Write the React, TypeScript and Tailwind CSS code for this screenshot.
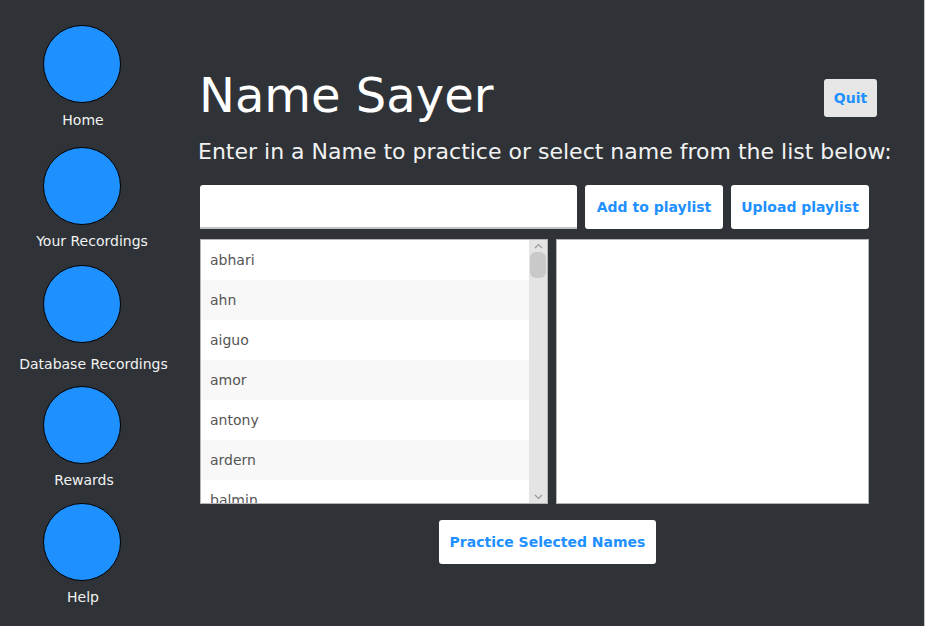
const navItems = [
  { label: "Home", circleMt: "mt-[25px]", labelMt: "mt-[9px]", shift: "pl-[2px]" },
  { label: "Your Recordings", circleMt: "mt-[18px]", labelMt: "mt-[8px]", shift: "pl-[20px]" },
  { label: "Database Recordings", circleMt: "mt-[15px]", labelMt: "mt-[13px]", shift: "pl-[23px]" },
  { label: "Rewards", circleMt: "mt-[13px]", labelMt: "mt-[8px]", shift: "pl-[4px]" },
  { label: "Help", circleMt: "mt-[14px]", labelMt: "mt-[8px]", shift: "pl-[2px]" },
];

const names = ["abhari", "ahn", "aiguo", "amor", "antony", "ardern", "balmin"];

function Chevron({ up }: { up?: boolean }) {
  return (
    <svg width="9" height="6" viewBox="0 0 9 6" className="text-[#9a9a9a]">
      <polyline
        points={up ? "1,5 4.5,1.5 8,5" : "1,1 4.5,4.5 8,1"}
        fill="none"
        stroke="currentColor"
        strokeWidth="1.2"
      />
    </svg>
  );
}

export default function App() {
  return (
    <div className="flex h-[626px] w-[925px] overflow-hidden border-r border-[#c4c4c4] bg-[#2f3338] font-['DejaVu_Sans',sans-serif]">
      {/* sidebar */}
      <aside className="flex w-[164px] shrink-0 flex-col items-center">
        {navItems.map((item) => (
          <div key={item.label} className="flex flex-col items-center">
            <div className={`${item.circleMt} h-[78px] w-[78px] rounded-full border border-black bg-[#1e90ff]`} />
            <span className={`${item.labelMt} ${item.shift} whitespace-nowrap text-[14px] leading-[17px] text-[#f2f2f2]`}>
              {item.label}
            </span>
          </div>
        ))}
      </aside>

      {/* main */}
      <main className="ml-[36px] flex w-[677px] flex-col pt-[71px]">
        <div className="flex items-start">
          <h1 className="-ml-[1px] text-[48px] leading-none text-white">Name Sayer</h1>
          <button className="ml-auto mt-[8px] h-[38px] w-[53px] rounded-[3px] bg-[#e6e6e6] pt-px text-[14px] font-bold text-[#1e90ff]">
            Quit
          </button>
        </div>

        <p className="-ml-[2px] mt-[22px] whitespace-nowrap text-[22px] leading-none text-[#f2f2f2]">
          Enter in a Name to practice or select name from the list below:
        </p>

        <div className="mt-[22px] flex w-[669px] gap-[8px]">
          <input
            type="text"
            className="h-[44px] w-[377px] rounded-t-[3px] border-b-2 border-[#c2c2c2] bg-white px-2 text-[14px] outline-none"
          />
          <button className="h-[44px] w-[138px] rounded-[3px] bg-white pt-px text-[14px] font-bold text-[#1e90ff]">
            Add to playlist
          </button>
          <button className="h-[44px] w-[138px] rounded-[3px] bg-white pt-px text-[14px] font-bold text-[#1e90ff]">
            Upload playlist
          </button>
        </div>

        <div className="mt-[10px] flex w-[669px] gap-[8px]">
          <div className="flex h-[265px] w-[349px] overflow-hidden border border-[#b4b4b4] bg-white">
            <ul className="flex-1">
              {names.map((n, i) => (
                <li
                  key={n}
                  className={`flex h-[40px] items-center pl-[9px] text-[14px] text-[#555555] ${i % 2 === 1 ? "bg-[#f8f8f8]" : "bg-white"}`}
                >
                  {n}
                </li>
              ))}
            </ul>
            <div className="flex w-[18px] flex-col items-center bg-[#e4e4e4]">
              <div className="flex h-[12px] items-center">
                <Chevron up />
              </div>
              <div className="h-[26px] w-[16px] rounded-[6px] bg-[#c9c9c9]" />
              <div className="mt-auto flex h-[12px] items-center">
                <Chevron />
              </div>
            </div>
          </div>
          <div className="h-[265px] w-[313px] border border-[#b4b4b4] bg-white" />
        </div>

        <button className="ml-[239px] mt-[16px] h-[44px] w-[217px] rounded-[3px] bg-white pt-px text-[14px] font-bold text-[#1e90ff]">
          Practice Selected Names
        </button>
      </main>
    </div>
  );
}
